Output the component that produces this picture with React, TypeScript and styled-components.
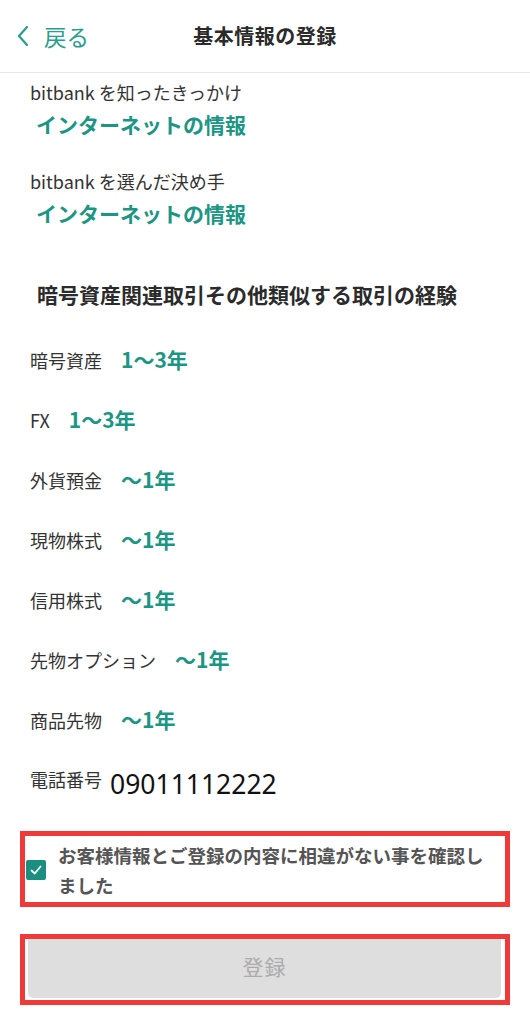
import React, { useState } from 'react';
import styled, { createGlobalStyle } from 'styled-components';

const GlobalStyle = createGlobalStyle`
  html, body {
    margin: 0;
    padding: 0;
    background: #ffffff;
  }
  body {
    font-family: "Noto Sans CJK JP", "Noto Sans", sans-serif;
    color: #333333;
  }
`;

const Page = styled.div`
  width: 530px;
  min-height: 1024px;
  background: #ffffff;
`;

const Header = styled.header`
  position: relative;
  height: 73px;
  display: flex;
  align-items: center;
  justify-content: center;
  border-bottom: 1px solid #e8e8e8;
  box-sizing: border-box;
`;

const BackButton = styled.button`
  position: absolute;
  left: 16px;
  top: 0;
  bottom: 0;
  display: flex;
  align-items: center;
  gap: 14px;
  border: none;
  background: none;
  padding: 0;
  color: #2a9d8c;
  font-family: inherit;
  font-size: 22.5px;
  cursor: pointer;
`;

const Title = styled.h1`
  margin: 0 0 2px 0;
  font-size: 20px;
  font-weight: 700;
  color: #2b2b2b;
  letter-spacing: 0.5px;
`;

const Content = styled.main`
  padding: 3px 20px 0 20px;
  display: flex;
  flex-direction: column;
`;

const Field = styled.section<{ $gap?: number }>`
  display: flex;
  flex-direction: column;
  padding-left: 10px;
  margin-top: ${p => p.$gap ?? 0}px;
`;

const Label = styled.div`
  font-size: 18px;
  line-height: 32px;
  color: #333333;
`;

const Value = styled.div`
  font-size: 21px;
  line-height: 32px;
  font-weight: 700;
  color: #1d9584;
  padding-left: 6px;
`;

const SectionTitle = styled.h2`
  margin: 49px 0 0 0;
  padding-left: 17px;
  font-size: 21px;
  line-height: 32px;
  font-weight: 700;
  color: #2b2b2b;
`;

const ExperienceList = styled.div`
  margin-top: 20px;
  display: flex;
  flex-direction: column;
`;

const ExperienceRow = styled.div`
  height: 60px;
  display: flex;
  align-items: center;
  gap: 19px;
  padding-left: 10px;
`;

const RowLabel = styled.span`
  font-size: 18px;
  color: #333333;
`;

const RowValue = styled.span`
  font-size: 21px;
  font-weight: 700;
  color: #1d9584;
  margin-bottom: 2px;
`;

const PhoneRow = styled.div`
  margin-top: 14px;
  height: 40px;
  display: flex;
  align-items: flex-start;
  gap: 8px;
  padding-left: 10px;
`;

const PhoneLabel = styled.span`
  font-size: 18px;
  line-height: 22px;
  margin-top: 4px;
  color: #333333;
`;

const PhoneNumber = styled.span`
  font-family: "Noto Sans", sans-serif;
  font-size: 26.5px;
  line-height: 40px;
  color: #111111;
`;

const Highlight = styled.div<{ $top: number }>`
  margin-top: ${p => p.$top}px;
  border: 5px solid #f03a3a;
  box-sizing: border-box;
`;

const ConfirmLabel = styled.label`
  display: flex;
  align-items: center;
  gap: 12px;
  padding: 4px 6px 2px 1px;
  cursor: pointer;
`;

const CheckBox = styled.span<{ $checked: boolean }>`
  flex: none;
  width: 20px;
  height: 20px;
  border-radius: 2px;
  background: ${p => (p.$checked ? '#1a8f7f' : '#ffffff')};
  border: ${p => (p.$checked ? 'none' : '2px solid #999')};
  display: flex;
  align-items: center;
  justify-content: center;
  box-sizing: border-box;
`;

const ConfirmText = styled.span`
  font-size: 18.5px;
  line-height: 30px;
  font-weight: 700;
  color: #555555;
`;

const SubmitWrap = styled.div`
  padding: 0 4px 2px 3px;
`;

const SubmitButton = styled.button`
  width: 100%;
  height: 59px;
  padding: 0 0 5px 0;
  border: none;
  border-radius: 0 0 5px 5px;
  background: #dedede;
  color: #ababab;
  font-family: inherit;
  font-size: 21px;
  letter-spacing: 1px;
`;

const experiences = [
  { label: '暗号資産', value: '1〜3年' },
  { label: 'FX', value: '1〜3年' },
  { label: '外貨預金', value: '〜1年' },
  { label: '現物株式', value: '〜1年' },
  { label: '信用株式', value: '〜1年' },
  { label: '先物オプション', value: '〜1年' },
  { label: '商品先物', value: '〜1年' },
];

const App: React.FC = () => {
  const [checked, setChecked] = useState(true);

  return (
    <Page>
      <GlobalStyle />
      <Header>
        <BackButton>
          <svg width="14" height="22" viewBox="0 0 14 22">
            <path d="M11 2 L3 11 L11 20" fill="none" stroke="#2a9d8c" strokeWidth="2.2" strokeLinecap="round" strokeLinejoin="round" />
          </svg>
          戻る
        </BackButton>
        <Title>基本情報の登録</Title>
      </Header>

      <Content>
        <Field>
          <Label>bitbank を知ったきっかけ</Label>
          <Value>インターネットの情報</Value>
        </Field>
        <Field $gap={25}>
          <Label>bitbank を選んだ決め手</Label>
          <Value>インターネットの情報</Value>
        </Field>

        <SectionTitle>暗号資産関連取引その他類似する取引の経験</SectionTitle>

        <ExperienceList>
          {experiences.map(item => (
            <ExperienceRow key={item.label}>
              <RowLabel>{item.label}</RowLabel>
              <RowValue>{item.value}</RowValue>
            </ExperienceRow>
          ))}
        </ExperienceList>

        <PhoneRow>
          <PhoneLabel>電話番号</PhoneLabel>
          <PhoneNumber>09011112222</PhoneNumber>
        </PhoneRow>

        <Highlight $top={27}>
          <ConfirmLabel onClick={() => setChecked(!checked)}>
            <CheckBox $checked={checked}>
              {checked && (
                <svg width="14" height="14" viewBox="0 0 14 14">
                  <path d="M2.5 7.5 L5.8 10.5 L11.5 3.5" fill="none" stroke="#ffffff" strokeWidth="1.8" strokeLinecap="round" strokeLinejoin="round" />
                </svg>
              )}
            </CheckBox>
            <ConfirmText>お客様情報とご登録の内容に相違がない事を確認しました</ConfirmText>
          </ConfirmLabel>
        </Highlight>

        <Highlight $top={27}>
          <SubmitWrap>
            <SubmitButton disabled>登録</SubmitButton>
          </SubmitWrap>
        </Highlight>
      </Content>
    </Page>
  );
};

export default App;
